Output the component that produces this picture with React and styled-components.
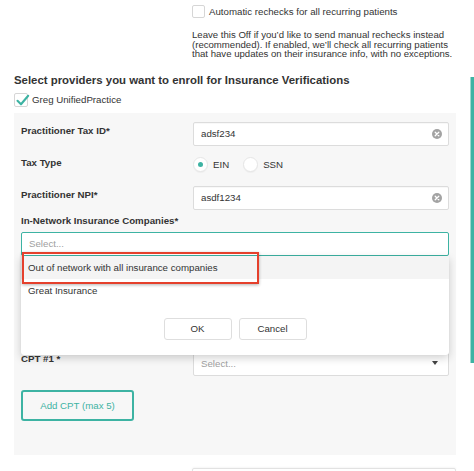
import React from 'react';
import styled, { createGlobalStyle } from 'styled-components';

const TEAL = '#3db3a3';

const Global = createGlobalStyle`
  html, body { margin: 0; padding: 0; background: #fff; }
  body {
    font-family: "Liberation Sans", Arial, Helvetica, sans-serif;
    color: #333;
    -webkit-font-smoothing: antialiased;
  }
  * { box-sizing: border-box; }
`;

const Page = styled.div`
  position: relative;
  width: 474px;
  height: 471px;
  overflow: hidden;
  background: #fff;
  padding-top: 5px;
`;

const Intro = styled.div`
  padding-left: 192px;
`;

const CheckRow = styled.label`
  display: flex;
  align-items: center;
  gap: ${p => p.$gap || 4}px;
  font-size: 9.7px;
  line-height: 12px;
  color: #333;
  margin-left: ${p => p.$indent || 0}px;
  margin-top: ${p => p.$top || 0}px;
`;

const Box = styled.span`
  position: relative;
  flex: none;
  width: ${p => p.$size}px;
  height: ${p => p.$size}px;
  border: 1px solid #d6d6d6;
  border-radius: 2px;
  background: #fff;
  svg { position: absolute; left: 1px; top: 0px; }
`;

const Help = styled.p`
  margin: 12px 0 0;
  font-size: 9.6px;
  line-height: 9.5px;
  color: #333;
`;

const Heading = styled.h2`
  margin: 14px 0 0 14px;
  font-size: 11.4px;
  line-height: 14px;
  font-weight: 700;
  color: #333;
`;

const Panel = styled.div`
  margin: 6px 18px 0 14px;
  background: #f7f7f7;
  padding: 9px 7px 34px;
`;

const FormRow = styled.div`
  display: grid;
  grid-template-columns: 172px 1fr;
  align-items: start;
  margin-top: ${p => p.$top || 0}px;
`;

const Label = styled.div`
  font-size: 9.7px;
  font-weight: 700;
  line-height: 12px;
  color: #333;
  padding-top: ${p => (p.$pad === undefined ? 3 : p.$pad)}px;
  margin-top: ${p => p.$top || 0}px;
`;

const Field = styled.div`
  position: relative;
  display: flex;
  align-items: center;
  justify-content: space-between;
  height: ${p => p.$h || 24}px;
  background: #fff;
  border: 1px solid ${p => (p.$focus ? TEAL : '#dcdcdc')};
  border-radius: 2px;
  padding: 0 6px 0 7px;
  font-size: 9.7px;
  color: ${p => (p.$placeholder ? '#a0a0a0' : '#333')};
  margin-top: ${p => p.$top || 0}px;
  box-shadow: ${p => (p.$focus ? 'none' : 'inset 0 1px 1px rgba(0,0,0,0.03)')};
`;

const Radios = styled.div`
  display: flex;
  align-items: center;
  height: 16px;
  font-size: 9.7px;
  color: #333;
`;

const RadioItem = styled.span`
  display: flex;
  align-items: center;
  gap: 5px;
  margin-right: 14px;
`;

const RadioCircle = styled.span`
  position: relative;
  width: 15px;
  height: 15px;
  border-radius: 50%;
  background: #fff;
  border: 1px solid #e6e6e6;
  box-shadow: 0 1px 1px rgba(0,0,0,0.04);
  &::after {
    content: '';
    display: ${p => (p.$on ? 'block' : 'none')};
    position: absolute;
    left: 4px;
    top: 4px;
    width: 5px;
    height: 5px;
    border-radius: 50%;
    background: ${TEAL};
  }
`;

const SelectWrap = styled.div`
  position: relative;
  margin-top: 5px;
`;

const Menu = styled.div`
  position: absolute;
  top: 100%;
  left: 0;
  right: 0;
  z-index: 5;
  background: #fff;
  border-radius: 0 0 3px 3px;
  box-shadow: 0 3px 8px rgba(0,0,0,0.18), 0 0 1px rgba(0,0,0,0.1);
`;

const Option = styled.div`
  height: 23px;
  display: flex;
  align-items: center;
  padding-left: 7px;
  font-size: 9.7px;
  color: #333;
  background: ${p => (p.$active ? '#f4f4f4' : '#fff')};
`;

const Highlight = styled.div`
  position: absolute;
  left: 1px;
  top: -4px;
  width: 237px;
  height: 32px;
  border: 2px solid #e5402c;
  box-shadow: 0 1px 3px rgba(0,0,0,0.3);
  pointer-events: none;
`;

const Actions = styled.div`
  display: flex;
  justify-content: center;
  gap: 7px;
  padding: 16px 0 15px;
`;

const Btn = styled.button`
  width: 68px;
  height: 22px;
  background: #fff;
  border: 1px solid #dedede;
  border-radius: 3px;
  font-family: inherit;
  font-size: 9.7px;
  color: #333;
  padding: 0;
`;

const AddBtn = styled.button`
  display: block;
  margin-top: 14px;
  width: 113px;
  height: 31px;
  background: transparent;
  border: 2px solid ${TEAL};
  border-radius: 3px;
  font-family: inherit;
  font-size: 9.7px;
  color: ${TEAL};
  padding: 0;
`;

const BottomRow = styled.div`
  display: grid;
  grid-template-columns: 178px 1fr;
  margin: 13px 18px 0 14px;
`;

const BottomField = styled.div`
  height: 24px;
  background: #fff;
  border: 1px solid #e2e2e2;
  border-radius: 2px;
  box-shadow: 0 -1px 2px rgba(0,0,0,0.04);
`;

const Scroll = styled.div`
  position: absolute;
  right: 0;
  top: 77px;
  width: 4px;
  height: 286px;
  background: ${TEAL};
  border-left: 1px solid #9fd8cf;
`;

const ClearIcon = () => (
  <svg width="10" height="10" viewBox="0 0 10 10">
    <circle cx="5" cy="5" r="5" fill="#a3a3a3" />
    <path d="M3.2 3.2 L6.8 6.8 M6.8 3.2 L3.2 6.8" stroke="#fff" strokeWidth="1.3" strokeLinecap="round" />
  </svg>
);

const Caret = () => (
  <svg width="6" height="4" viewBox="0 0 6 4" style={{ marginRight: 4 }}>
    <path d="M0 0 L6 0 L3 4 Z" fill="#444" />
  </svg>
);

const Check = () => (
  <svg width="14" height="13" viewBox="0 0 14 13">
    <path d="M1.5 6.8 L5 10.3 L12.2 1.8" fill="none" stroke={TEAL} strokeWidth="2.1" strokeLinecap="round" strokeLinejoin="round" />
  </svg>
);

export default function App() {
  return (
    <Page>
      <Global />
      <Intro>
        <CheckRow $gap={4}>
          <Box $size={13} />
          Automatic rechecks for all recurring patients
        </CheckRow>
        <Help>
          Leave this Off if you’d like to send manual rechecks instead
          <br />
          (recommended). If enabled, we’ll check all recurring patients
          <br />
          that have updates on their insurance info, with no exceptions.
        </Help>
      </Intro>

      <Heading>Select providers you want to enroll for Insurance Verifications</Heading>

      <CheckRow $indent={14} $top={6} $gap={4}>
        <Box $size={14}>
          <Check />
        </Box>
        Greg UnifiedPractice
      </CheckRow>

      <Panel>
        <FormRow>
          <Label>Practitioner Tax ID*</Label>
          <Field>
            adsf234
            <ClearIcon />
          </Field>
        </FormRow>

        <FormRow $top={11}>
          <Label $pad={0}>Tax Type</Label>
          <Radios>
            <RadioItem>
              <RadioCircle $on />
              EIN
            </RadioItem>
            <RadioItem>
              <RadioCircle />
              SSN
            </RadioItem>
          </Radios>
        </FormRow>

        <FormRow $top={13}>
          <Label>Practitioner NPI*</Label>
          <Field>
            asdf1234
            <ClearIcon />
          </Field>
        </FormRow>

        <Label $pad={0} $top={5}>In-Network Insurance Companies*</Label>
        <SelectWrap>
          <Field $focus $placeholder>Select...</Field>
          <Menu>
            <Option $active>Out of network with all insurance companies</Option>
            <Option>Great Insurance</Option>
            <Actions>
              <Btn>OK</Btn>
              <Btn>Cancel</Btn>
            </Actions>
            <Highlight />
          </Menu>
        </SelectWrap>

        <FormRow $top={95}>
          <Label $pad={2}>CPT #1 *</Label>
          <Field $placeholder $h={25}>
            Select...
            <Caret />
          </Field>
        </FormRow>

        <AddBtn>Add CPT (max 5)</AddBtn>
      </Panel>

      <BottomRow>
        <span />
        <BottomField />
      </BottomRow>

      <Scroll />
    </Page>
  );
}
